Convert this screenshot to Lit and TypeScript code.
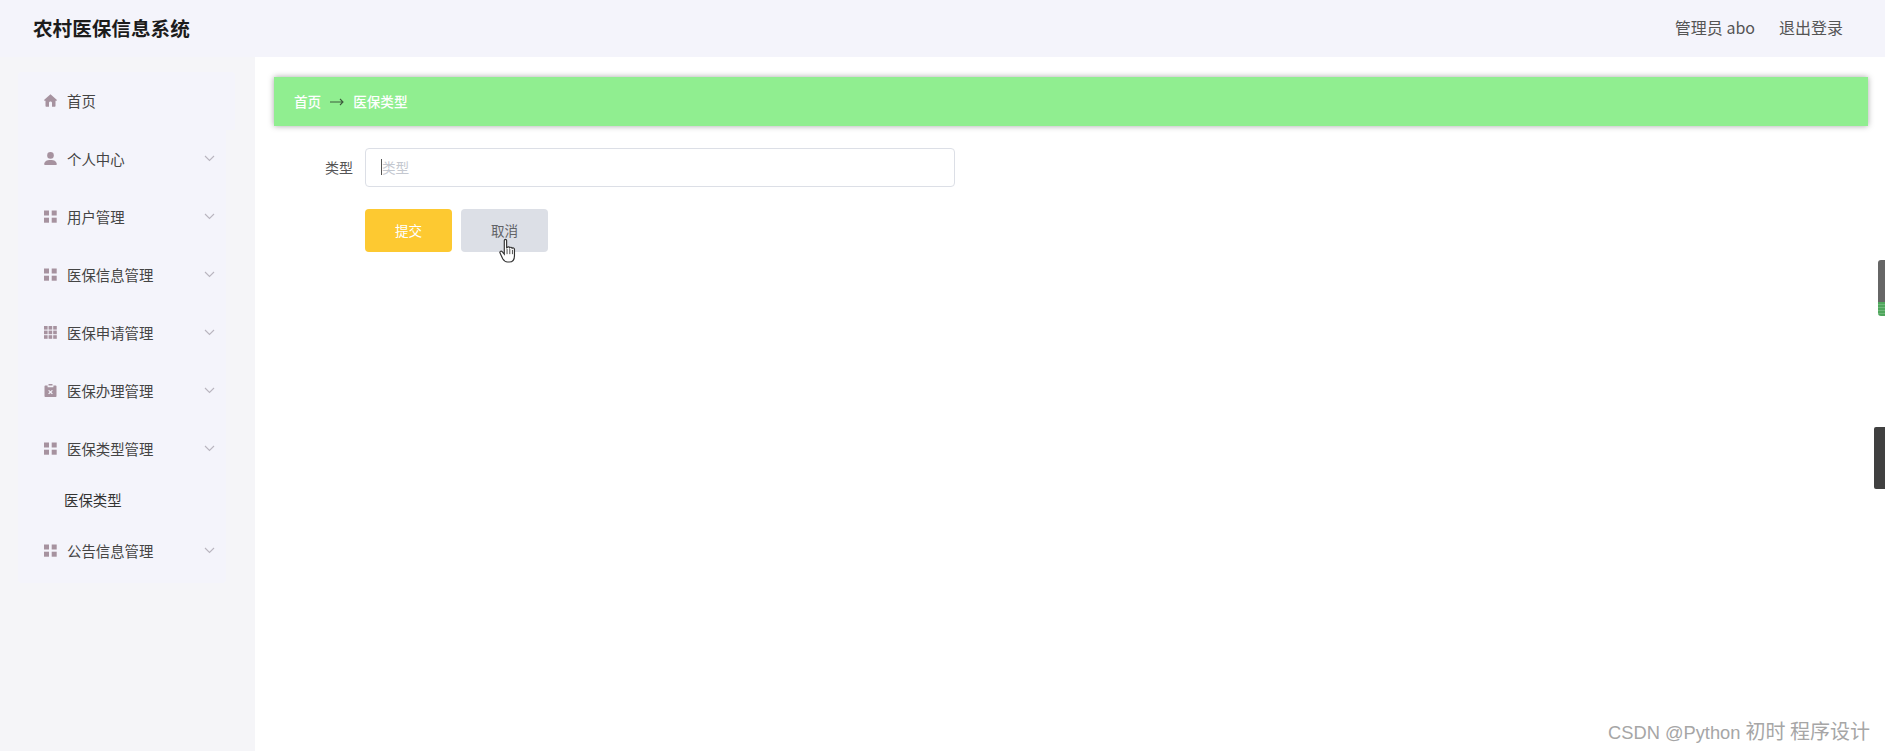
import { LitElement, html, css, svg } from "lit";
import { customElement } from "lit/decorators.js";

const icons: Record<string, unknown> = {
  home: svg`<path d="M6.500 0.300 0.300 5.700c-.4.400-.2 1 .3 1h.9v5.300c0 .4.300.7.700.7h2.800V9c0-.8.600-1.400 1.500-1.400S8 8.200 8 9v3.700h2.800c.4 0 .7-.3.700-.7V6.700h.9c.5 0 .7-.6.300-1z"/>`,
  user: svg`<circle cx="6.500" cy="3.400" r="3.300"/><path d="M0.200 12.300c0-3 2.600-4.400 6.300-4.400s6.300 1.400 6.300 4.400c0 .5-.3.700-.7.700H.9c-.4 0-.7-.2-.7-.7z"/>`,
  grid: svg`<rect x="0" y="0.500" width="5" height="5"/><rect x="7.700" y="0.500" width="5" height="5"/><rect x="0" y="7.700" width="5" height="5"/><rect x="7.700" y="7.700" width="5" height="5"/>`,
  grid9: svg`<rect x="0" y="0" width="3.600" height="3.600"/><rect x="4.600" y="0" width="3.600" height="3.600"/><rect x="9.200" y="0" width="3.600" height="3.600"/><rect x="0" y="4.600" width="3.600" height="3.600"/><rect x="4.600" y="4.600" width="3.600" height="3.600"/><rect x="9.200" y="4.600" width="3.600" height="3.600"/><rect x="0" y="9.200" width="3.600" height="3.600"/><rect x="4.600" y="9.200" width="3.600" height="3.600"/><rect x="9.200" y="9.200" width="3.600" height="3.600"/>`,
  clip: svg`<path fill-rule="evenodd" d="M4.500 0h4v1.400h3.200c.4 0 .8.400.8.800v10c0 .4-.4.800-.8.800H1.300c-.4 0-.8-.4-.8-.8v-10c0-.4.400-.8.800-.8h3.200zM3.600 1.400v1.800h5.800V1.400zM5 5.900 4.200 6.700 5.700 8.100 4.200 9.500l.8.800 1.500-1.400L8 10.300l.8-.8-1.500-1.400L8.800 6.700 8 5.900 6.500 7.300z"/>`,
};

const menu = [
  { label: "首页", icon: "home", arrow: false },
  { label: "个人中心", icon: "user", arrow: true },
  { label: "用户管理", icon: "grid", arrow: true },
  { label: "医保信息管理", icon: "grid", arrow: true },
  { label: "医保申请管理", icon: "grid9", arrow: true },
  { label: "医保办理管理", icon: "clip", arrow: true },
  { label: "医保类型管理", icon: "grid", arrow: true, sub: "医保类型" },
  { label: "公告信息管理", icon: "grid", arrow: true },
];

@customElement("app-root")
export class AppRoot extends LitElement {
  static styles = css`
    :host {
      display: block;
      height: 751px;
      overflow: hidden;
      position: relative;
      background: #fff;
      font-family: "Noto Sans CJK SC", "Liberation Sans", sans-serif;
      color: #333;
    }
    .header {
      height: 57px;
      box-sizing: border-box;
      background: #f4f4fb;
      display: flex;
      align-items: center;
      justify-content: space-between;
      padding: 0 42px 2px 33px;
    }
    .title {
      font-size: 19.6px;
      font-weight: 700;
      color: #1c1c1c;
    }
    .user {
      display: flex;
      gap: 24px;
      font-size: 16px;
      color: #555;
      margin-bottom: 1px;
    }
    .body {
      display: flex;
      height: 694px;
    }
    .side {
      width: 255px;
      flex: none;
      background: #f5f5f8;
      padding: 14.5px 0 0 18px;
      box-sizing: border-box;
    }
    .menu {
      width: 208px;
      background: #f4f4fb;
      padding-bottom: 3px;
      border-radius: 4px;
    }
    .row {
      height: 58px;
      display: flex;
      align-items: center;
      padding-left: 26px;
      font-size: 14.4px;
      color: #444;
    }
    .row.first {
      margin-right: -9px;
      background: #f4f4fb;
      border-radius: 4px 4px 0 0;
    }
    .row svg.ic {
      width: 13px;
      height: 13px;
      fill: #a6929f;
      flex: none;
      margin-right: 10px;
    }
    .row .arrow {
      width: 11px;
      height: 7px;
      margin-left: auto;
      margin-right: 11px;
      fill: none;
      stroke: #b9b5bf;
      stroke-width: 1.1;
    }
    .sub {
      height: 44px;
      display: flex;
      align-items: center;
      padding-left: 46px;
      font-size: 14.4px;
      color: #333;
    }
    .main {
      flex: 1;
      padding: 20px 17px 0 19px;
      min-width: 0;
    }
    .crumb {
      height: 49px;
      box-sizing: border-box;
      background: #90ee90;
      box-shadow: 0 0 6px rgba(0, 0, 0, 0.35);
      display: flex;
      align-items: center;
      padding: 0 0 2px 20px;
      color: #fff;
      font-size: 13.6px;
      font-weight: 500;
    }
    .crumb .sep {
      width: 14px;
      height: 8px;
      margin: 2px 9px 0 9px;
      fill: none;
      stroke: #3c5a3c;
      stroke-width: 1.1;
    }
    .form {
      padding-top: 22px;
    }
    .field {
      display: flex;
      align-items: center;
      gap: 12px;
    }
    .lab {
      width: 79px;
      text-align: right;
      font-size: 14px;
      color: #555;
      padding-bottom: 1px;
    }
    .input {
      width: 590px;
      height: 39px;
      box-sizing: border-box;
      border: 1px solid #dcdfe6;
      border-radius: 4px;
      display: flex;
      align-items: center;
      padding: 0 0 1px 15px;
      font-size: 13.6px;
      color: #c4c8d0;
    }
    .caret {
      width: 1px;
      height: 16px;
      background: #555;
    }
    .btns {
      display: flex;
      gap: 9px;
      padding: 22px 0 0 91px;
      position: relative;
    }
    .btn {
      width: 87px;
      height: 43px;
      box-sizing: border-box;
      padding-bottom: 2px;
      border-radius: 4px;
      display: flex;
      align-items: center;
      justify-content: center;
      font-size: 13.6px;
    }
    .ok {
      background: #fdc931;
      color: #fff;
    }
    .no {
      background: #dcdfe6;
      color: #606266;
    }
    .cursor {
      position: absolute;
      left: 225px;
      top: 51px;
      width: 18px;
      height: 27px;
    }
    .scroll-a {
      position: absolute;
      right: 0;
      top: 260px;
      width: 7px;
      height: 56px;
      border-radius: 3px 0 0 3px;
      background: repeating-linear-gradient(#4fa65c 0 2px, #6fb87a 2px 3px) 0 42px / 100% 14px no-repeat, #666;
    }
    .scroll-b {
      position: absolute;
      right: 0;
      top: 427px;
      width: 11px;
      height: 62px;
      border-radius: 2px 0 0 2px;
      background: #404040;
    }
    .mark {
      position: absolute;
      right: 15px;
      top: 718px;
      font-size: 18.3px;
      line-height: 26px;
      font-family: "Liberation Sans", "Noto Sans CJK SC", sans-serif;
      color: #a6a6a6;
    }
    .mark .cjk {
      font-size: 20px;
      font-family: "Noto Sans CJK SC", sans-serif;
    }
  `;

  render() {
    return html`
      <div class="header">
        <div class="title">农村医保信息系统</div>
        <div class="user"><span>管理员 abo</span><span>退出登录</span></div>
      </div>
      <div class="body">
        <div class="side">
          <div class="menu">
            ${menu.map(
              (m, i) => html`
                <div class="row ${i === 0 ? "first" : ""}">
                  <svg class="ic" viewBox="0 0 13 13">${icons[m.icon]}</svg>
                  <span>${m.label}</span>
                  ${m.arrow
                    ? html`<svg class="arrow" viewBox="0 0 11 7"><path d="M1 1l4.500 4.500L10 1" /></svg>`
                    : null}
                </div>
                ${m.sub ? html`<div class="sub">${m.sub}</div>` : null}
              `
            )}
          </div>
        </div>
        <div class="main">
          <div class="crumb">
            <span>首页</span>
            <svg class="sep" viewBox="0 0 14 8"><path d="M0 4h13M10 1l3 3-3 3" /></svg>
            <span>医保类型</span>
          </div>
          <div class="form">
            <div class="field">
              <div class="lab">类型</div>
              <div class="input"><i class="caret"></i><span>类型</span></div>
            </div>
            <div class="btns">
              <div class="btn ok">提交</div>
              <div class="btn no">取消</div>
              <svg class="cursor" viewBox="0 0 17 25">
                <path
                  d="M5 2c0-1.300 2.200-1.300 2.200 0v7l.6-.2c.5-1 2-.9 2.300.1.600-.7 2-.5 2.300.5.700-.5 2.200-.2 2.200 1v6c0 3-1.500 6-5 6H8c-2.500 0-3.500-1.300-4.500-3L1 14c-.7-1.300.8-2.500 2-1.400L5 15z"
                  fill="#fff"
                  stroke="#333"
                  stroke-width="1.100"
                />
                <path d="M7.600 10v5M10.200 10v5M12.700 11v4" stroke="#333" stroke-width=".8" fill="none" />
              </svg>
            </div>
          </div>
        </div>
      </div>
      <div class="scroll-a"></div>
      <div class="scroll-b"></div>
      <div class="mark">CSDN @Python <span class="cjk">初时 程序设计</span></div>
    `;
  }
}
